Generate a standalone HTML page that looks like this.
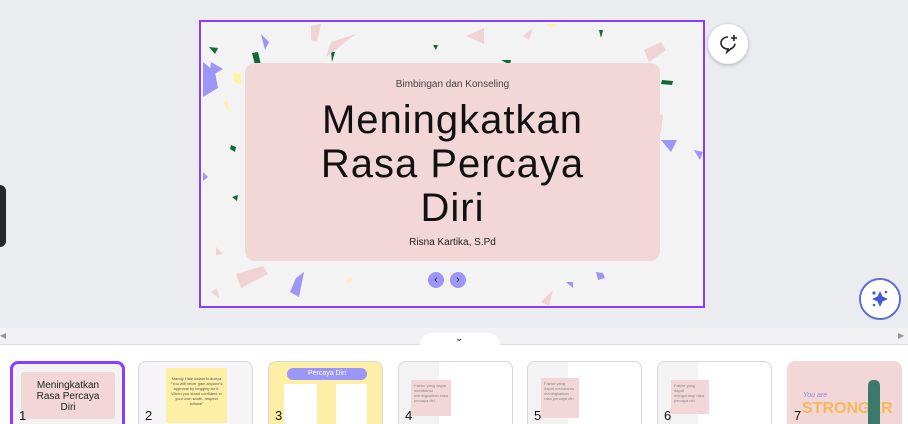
<!DOCTYPE html>
<html style="width:908px;height:424px;overflow:hidden"><head><style>
*{margin:0;padding:0;box-sizing:border-box}
body{width:908px;height:424px;overflow:hidden;background:#ebecf0;font-family:"Liberation Sans",sans-serif;position:relative}
.abs{position:absolute}
.slide{left:199px;top:20px;width:506px;height:288px;border:2px solid #8b3dff;background:#f3f3f3;overflow:hidden}
.pink{left:44px;top:41px;width:415px;height:198px;background:#f2d6d8;border-radius:10px;text-align:center;color:#111}
.thumb{top:361px;width:115px;height:63px;border:1px solid #d6d6dc;border-bottom:none;border-radius:8px 8px 0 0;background:#fff;overflow:hidden}
.num{position:absolute;left:6px;bottom:1px;font-size:13px;color:#111}
</style></head><body>
<div class="abs" style="left:0;top:185px;width:6px;height:62px;background:#25272b;border-radius:0 6px 6px 0"></div>

<div class="abs slide">
<svg class="abs" style="left:0;top:0" width="502" height="284">
<g fill="#9b96f7"><polygon points="2,40 14,50 17,66 2,75"/><polygon points="60,12 68,20 64,28"/><polygon points="330,220 342,218 338,232"/><polygon points="95,256 103,250 98,275 89,270"/><polygon points="493,128 502,130 499,138"/><polygon points="395,250 402,251 404,256 397,258"/><polygon points="365,260 372,260 372,266"/><polygon points="2,150 7,155 2,159"/><polygon points="460,118 476,118 470,130"/><polygon points="10,40 22,47 8,55"/></g>
<g fill="#0f6b34"><polygon points="8,25 17,26 14,32"/><polygon points="51,31 57,30 60,43 54,43"/><polygon points="130,30 134,30 131,40"/><polygon points="461,58 472,59 471,63 460,62"/><polygon points="30,123 35,125 34,130 29,127"/><polygon points="31,175 37,173 36,179"/><polygon points="398,8 402,8 400,16"/><polygon points="232,23 237,23 235,28"/><polygon points="300,38 310,38 309,43"/></g>
<g fill="#f2d3d5"><polygon points="110,4 120,2 116,20 110,18"/><polygon points="130,20 155,12 125,35"/><polygon points="265,14 283,6 283,22"/><polygon points="322,14 332,6 328,18"/><polygon points="443,28 460,20 465,28 448,40"/><polygon points="455,95 462,92 460,111 455,108"/><polygon points="35,252 62,244 67,252 40,266"/><polygon points="10,270 16,266 18,276"/><polygon points="15,225 22,232 15,233"/><polygon points="340,280 352,268 348,284"/><polygon points="440,195 448,190 443,203"/></g>
<g fill="#fbf3a8"><polygon points="32,50 40,52 40,63 33,60"/><polygon points="22,80 26,78 29,92"/><polygon points="148,255 152,258 146,262"/><polygon points="345,2 357,2 350,6"/></g>
</svg>
<div class="abs pink">
<div style="position:absolute;top:16px;width:100%;font-size:10px;color:#444">Bimbingan dan Konseling</div>
<div style="position:absolute;top:35px;width:100%;font-size:40px;line-height:44px;letter-spacing:1px">Meningkatkan<br>Rasa Percaya<br>Diri</div>
<div style="position:absolute;top:174px;width:100%;font-size:10px;color:#222">Risna Kartika, S.Pd</div>
</div>
<div class="abs" style="left:227px;top:250px;width:16px;height:16px;border-radius:50%;background:#9b96f7;color:#333;font-size:11px;text-align:center;line-height:16px">‹</div>
<div class="abs" style="left:249px;top:250px;width:16px;height:16px;border-radius:50%;background:#9b96f7;color:#333;font-size:11px;text-align:center;line-height:16px">›</div>
</div>

<div class="abs" style="left:708px;top:24px;width:40px;height:40px;border-radius:50%;background:#fff;box-shadow:0 1px 4px rgba(0,0,0,.25)">
<svg width="40" height="40"><path d="M20 13a7 6 0 1 0 0 12l-1 3 4-3.3a7 6 0 0 0 4-5" fill="none" stroke="#222" stroke-width="1.6"/><path d="M26 11v6M23 14h6" stroke="#222" stroke-width="1.6"/></svg>
</div>
<div class="abs" style="left:859px;top:278px;width:42px;height:42px;border-radius:50%;background:#fff;border:2px solid #5b6fd8">
<svg width="38" height="38"><path d="M19 11l2.5 5.5 5.5 2.5-5.5 2.5-2.5 5.5-2.5-5.5-5.5-2.5 5.5-2.5z" fill="#3f5bd6"/><circle cx="13" cy="13" r="1.6" fill="#3f5bd6"/><circle cx="25" cy="12" r="1.3" fill="#3f5bd6"/><circle cx="13" cy="25" r="1.3" fill="#3f5bd6"/></svg>
</div>

<div class="abs" style="left:0;top:328px;width:908px;height:96px;background:#fff"></div>
<div class="abs" style="left:0;top:328px;width:908px;height:17px;background:#f2f2f4;border-bottom:1px solid #dcdce0"></div>
<div class="abs" style="left:420px;top:333px;width:80px;height:13px;background:#fff;border-radius:12px 12px 0 0"></div>
<div class="abs" style="left:0;top:331px;font-size:8px;color:#999">◀</div>
<div class="abs" style="left:898px;top:331px;font-size:8px;color:#999">▶</div>
<div class="abs" style="left:455px;top:333px;font-size:10px;color:#222">⌄</div>

<div class="abs thumb" style="left:10px;border:3px solid #8b3dff;border-bottom:none;background:#f3f3f3">
<div class="abs" style="left:8px;top:8px;width:94px;height:47px;background:#f2d6d8;border-radius:3px;font-size:10px;text-align:center;line-height:11px;padding-top:8px;color:#222">Meningkatkan<br>Rasa Percaya<br>Diri</div><span class="num">1</span></div>
<div class="abs thumb" style="left:138px;background:#f6f4f6"><div class="abs" style="left:27px;top:6px;width:61px;height:55px;background:#fdf0a6;font-size:4px;text-align:center;padding:8px 2px;color:#555">Mandy Hale dalam bukunya "You will never gain anyone's approval by begging for it. When you stand confident in your own worth, respect follows"</div><span class="num">2</span></div>
<div class="abs thumb" style="left:268px;background:#fdf0a6"><div class="abs" style="left:18px;top:6px;width:80px;height:12px;background:#9b96f7;border-radius:6px;color:#fff;font-size:7px;text-align:center;line-height:12px">Percaya Diri</div><div class="abs" style="left:15px;top:22px;width:33px;height:50px;background:#fff"></div><div class="abs" style="left:67px;top:22px;width:31px;height:50px;background:#fff"></div><span class="num">3</span></div>
<div class="abs thumb" style="left:398px"><div class="abs" style="left:0;top:0;width:40px;height:70px;background:#f3f3f3"></div><div class="abs" style="left:12px;top:18px;width:40px;height:36px;background:#f2d6d8;font-size:4px;color:#888;padding:3px">Faktor yang dapat membantu meningkatkan rasa percaya diri</div><span class="num">4</span></div>
<div class="abs thumb" style="left:527px"><div class="abs" style="left:0;top:0;width:40px;height:70px;background:#f3f3f3"></div><div class="abs" style="left:13px;top:16px;width:38px;height:40px;background:#f2d6d8;font-size:4px;color:#888;padding:3px">Faktor yang dapat membantu meningkatkan rasa percaya diri</div><span class="num">5</span></div>
<div class="abs thumb" style="left:657px"><div class="abs" style="left:0;top:0;width:40px;height:70px;background:#f3f3f3"></div><div class="abs" style="left:13px;top:18px;width:38px;height:34px;background:#f2d6d8;font-size:4px;color:#888;padding:3px">Faktor yang dapat mengurangi rasa percaya diri</div><span class="num">6</span></div>
<div class="abs thumb" style="left:787px;background:#f2d6d8;border-color:#f2d6d8"><div class="abs" style="left:14px;top:38px;font-size:16px;font-weight:bold;color:#f7b85a">STRONGER</div><div class="abs" style="left:15px;top:30px;font-size:7px;color:#8a8ad0;font-style:italic">You are</div><div class="abs" style="left:80px;top:18px;width:12px;height:50px;background:#3a7a6a;border-radius:5px"></div><span class="num">7</span></div>
</body></html>
